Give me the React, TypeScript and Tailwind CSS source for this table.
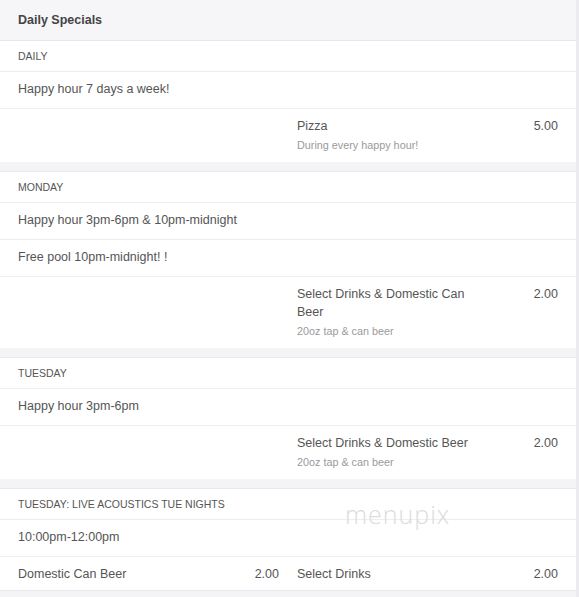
import React from 'react'

type Item = { name: string; price: string; desc?: string }
type Section = { label: string; notes: string[]; items: Item[] }

const sections: Section[] = [
  {
    label: 'Daily',
    notes: ['Happy hour 7 days a week!'],
    items: [{ name: 'Pizza', price: '5.00', desc: 'During every happy hour!' }],
  },
  {
    label: 'Monday',
    notes: ['Happy hour 3pm-6pm & 10pm-midnight', 'Free pool 10pm-midnight! !'],
    items: [{ name: 'Select Drinks & Domestic Can Beer', price: '2.00', desc: '20oz tap & can beer' }],
  },
  {
    label: 'Tuesday',
    notes: ['Happy hour 3pm-6pm'],
    items: [{ name: 'Select Drinks & Domestic Beer', price: '2.00', desc: '20oz tap & can beer' }],
  },
  {
    label: 'Tuesday: Live Acoustics Tue Nights',
    notes: ['10:00pm-12:00pm'],
    items: [
      { name: 'Domestic Can Beer', price: '2.00' },
      { name: 'Select Drinks', price: '2.00' },
    ],
  },
]

function MenuItem({ item }: { item: Item }) {
  return (
    <div className="flex items-start justify-between">
      <div className="w-[75%]">
        <div className="text-[12.5px] leading-[18px] text-[#555]">{item.name}</div>
        {item.desc && <div className="text-[10.8px] leading-[20px] text-[#9a9a9a]">{item.desc}</div>}
      </div>
      <div className="text-[12.5px] leading-[18px] text-[#555]">{item.price}</div>
    </div>
  )
}

export default function App() {
  return (
    <div className="relative w-[579px] h-[597px] overflow-hidden bg-[#ebebf0] font-['Liberation_Sans',Arial,sans-serif]">
      <div className="w-[576px] bg-white">
        {/* header */}
        <div className="h-[41px] flex items-center px-[18px] bg-[#f6f6f9] border-b border-[#e8e8ec]">
          <h2 className="text-[12.5px] font-bold text-[#444]">Daily Specials</h2>
        </div>

        {sections.map((s, i) => (
          <div key={i}>
            {i > 0 && <div className="h-[10px] bg-[#f4f4f7] border-b border-[#e9e9ed]" />}
            <div className="h-[31px] flex items-center px-[18px] pt-[2px] border-b border-[#ededf0] text-[10.5px] uppercase text-[#555]">
              {s.label}
            </div>
            {s.notes.map((n, j) => (
              <div key={j} className="h-[37px] flex items-center px-[18px] pb-[2px] border-b border-[#ededf0] text-[12.5px] text-[#555]">
                {n}
              </div>
            ))}
            <div className="grid grid-cols-2 gap-x-[18px] px-[18px] pt-[8px] pb-[7px]">
              {s.items.length === 1 && <div />}
              {s.items.map((it, k) => (
                <MenuItem key={k} item={it} />
              ))}
            </div>
          </div>
        ))}
        <div className="h-[10px] bg-[#f4f4f7] border-t border-[#e9e9ed]" />
      </div>

      {/* watermark */}
      <div className="absolute left-[345px] top-[496px] text-[25px] font-light tracking-[1px] text-[#dcdcdc] font-['Open_Sans',sans-serif] select-none">
        menupix
      </div>
    </div>
  )
}
